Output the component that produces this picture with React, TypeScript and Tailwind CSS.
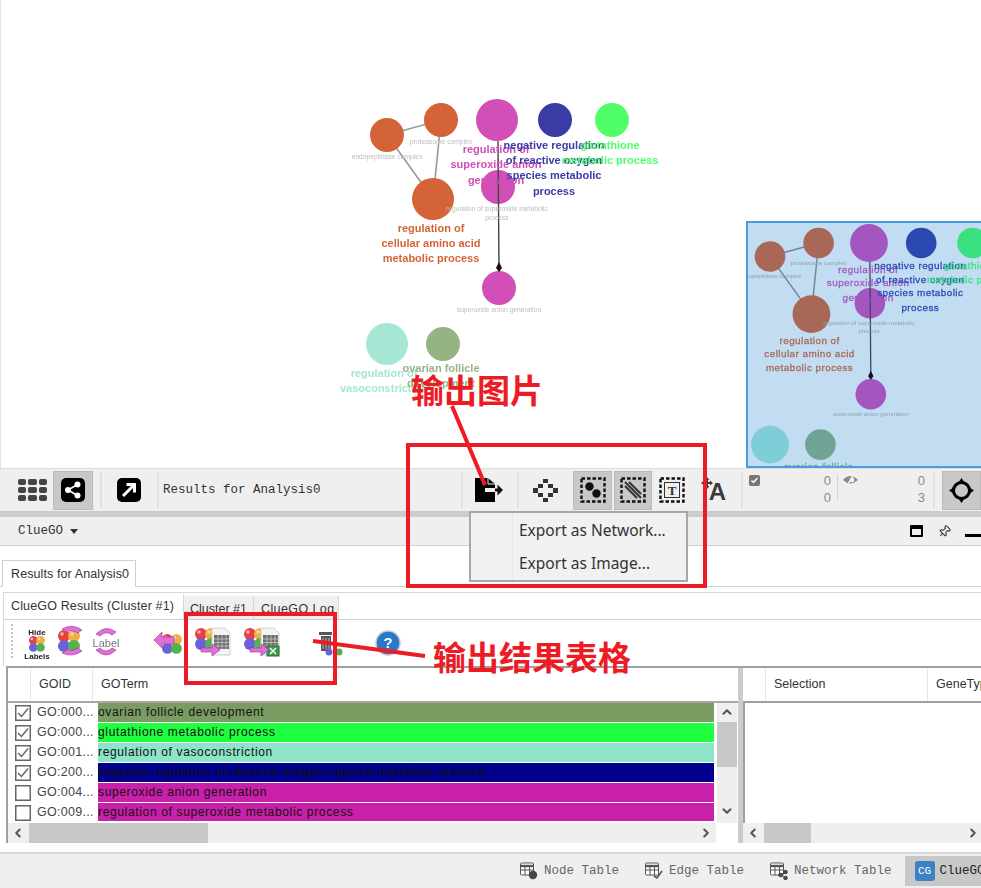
import { ChevronDown, ChevronLeft, ChevronRight, ChevronUp, Pin } from 'lucide-react';

const MONO = "font-['Liberation_Mono',monospace]";
const SANS = "font-['Liberation_Sans',Arial,sans-serif]";

// ClueGO graph, same data for the main view and the bird's eye view
const nodes = [
  { x: 387, y: 135, r: 17, c: 'orange' },
  { x: 441, y: 120, r: 17, c: 'orange' },
  { x: 433, y: 199, r: 21, c: 'orange' },
  { x: 497, y: 120, r: 21, c: 'purple' },
  { x: 498, y: 187, r: 17, c: 'purple' },
  { x: 499, y: 288, r: 17, c: 'purple' },
  { x: 555, y: 120, r: 17, c: 'navy' },
  { x: 612, y: 120, r: 17, c: 'green' },
  { x: 387, y: 344, r: 21, c: 'teal' },
  { x: 443, y: 344, r: 17, c: 'olive' },
];

const labels = [
  { x: 496, y: 153, t: 'regulation of', c: 'purple' },
  { x: 496, y: 168, t: 'superoxide anion', c: 'purple' },
  { x: 496, y: 184, t: 'generation', c: 'purple' },
  { x: 554, y: 149, t: 'negative regulation', c: 'navy' },
  { x: 554, y: 164, t: 'of reactive oxygen', c: 'navy' },
  { x: 554, y: 179, t: 'species metabolic', c: 'navy' },
  { x: 554, y: 195, t: 'process', c: 'navy' },
  { x: 610, y: 149, t: 'glutathione', c: 'green' },
  { x: 610, y: 164, t: 'metabolic process', c: 'green' },
  { x: 431, y: 232, t: 'regulation of', c: 'orange' },
  { x: 431, y: 247, t: 'cellular amino acid', c: 'orange' },
  { x: 431, y: 262, t: 'metabolic process', c: 'orange' },
  { x: 384, y: 377, t: 'regulation of', c: 'teal' },
  { x: 384, y: 392, t: 'vasoconstriction', c: 'teal' },
  { x: 441, y: 372, t: 'ovarian follicle', c: 'olive' },
  { x: 441, y: 387, t: 'development', c: 'olive' },
];

const smallLabels = [
  { x: 441, y: 144, t: 'proteasome complex' },
  { x: 387, y: 159, t: 'endopeptidase complex' },
  { x: 497, y: 211, t: 'regulation of superoxide metabolic' },
  { x: 497, y: 220, t: 'process' },
  { x: 499, y: 312, t: 'superoxide anion generation' },
];

const mainColors: Record<string, string> = {
  orange: '#d46337',
  purple: '#d14fb6',
  navy: '#3a3ba5',
  green: '#50ff68',
  teal: '#a6e6d5',
  olive: '#96b384',
};

const miniColors: Record<string, string> = {
  orange: '#a96757',
  purple: '#a356c0',
  navy: '#2b48b3',
  green: '#3adf80',
  teal: '#7eced7',
  olive: '#70a595',
};

const Network = ({ mini }: { mini?: boolean }) => {
  const colors = mini ? miniColors : mainColors;
  return (
    <g>
      <path d="M387 135 L441 120 L433 199 Z" fill="none" stroke={mini ? '#6f8594' : '#999'} strokeWidth="1.6" />
      {nodes.map((n) => (
        <circle key={`${n.x}-${n.y}`} cx={n.x} cy={n.y} r={n.r} fill={colors[n.c]} />
      ))}
      <path d="M498 141 L499 268" stroke={mini ? '#33485c' : '#444'} strokeWidth="1.4" />
      <path d="M499 262 L502 268 L499 272 L496 268 Z" fill="#111" />
      {labels.map((l) => (
        <text
          key={`${l.x}-${l.y}`}
          x={l.x}
          y={l.y}
          textAnchor="middle"
          fill={colors[l.c]}
          stroke={mini ? colors[l.c] : 'none'}
          strokeWidth={mini ? 0.3 : 0}
          className={mini ? "font-['Liberation_Sans',sans-serif] text-[11px] tracking-[0.5px]" : "font-['Liberation_Sans',sans-serif] text-[11px] font-bold"}
        >
          {l.t}
        </text>
      ))}
      {smallLabels.map((l) => (
        <text
          key={`${l.x}-${l.y}`}
          x={l.x}
          y={l.y}
          textAnchor="middle"
          fill={mini ? '#8fa3b5' : '#bdbdbd'}
          className="font-['Liberation_Sans',sans-serif] text-[6.7px]"
        >
          {l.t}
        </text>
      ))}
    </g>
  );
};

// glossy ball cluster used all over the ClueGO toolbar
const Balls = ({ x = 0, y = 0, s = 1 }: { x?: number; y?: number; s?: number }) => (
  <g transform={`translate(${x} ${y}) scale(${s})`}>
    <circle cx="6" cy="6" r="6" fill="#e8403f" />
    <circle cx="16" cy="6" r="6" fill="#eeb040" />
    <circle cx="6" cy="16" r="6" fill="#6a62d8" />
    <circle cx="16" cy="16" r="6" fill="#55b050" />
    <circle cx="4" cy="4" r="1.8" fill="#fff" opacity="0.6" />
    <circle cx="14" cy="4" r="1.8" fill="#fff" opacity="0.5" />
  </g>
);

const PinkArrow = ({ d }: { d: string }) => (
  <path d={d} fill="#e070d8" stroke="#a0309a" strokeWidth="0.6" />
);

const Sheet = ({ x, y }: { x: number; y: number }) => (
  <g transform={`translate(${x} ${y})`}>
    <path d="M0 0 H13 L18 5 V27 H0 Z" fill="#f4f4f4" stroke="#d0d0d0" />
    <path d="M2 7 H17 V21 H2 Z" fill="#6e6e6e" />
    <path d="M2 11 H17 M2 14.5 H17 M2 18 H17 M6 7 V21 M10 7 V21 M14 7 V21" stroke="#d4d4d4" strokeWidth="0.7" />
  </g>
);

const SelectIcon = ({ kind }: { kind: 'nodes' | 'edges' | 'text' }) => (
  <svg width="26" height="26" viewBox="0 0 26 26">
    <rect x="1.5" y="1.5" width="23" height="23" fill="none" stroke="#111" strokeWidth="2.4" strokeDasharray="3.5 2" />
    {kind === 'nodes' && (
      <>
        <circle cx="9.5" cy="9.5" r="4.2" fill="#111" />
        <circle cx="16.5" cy="16.5" r="4.2" fill="#111" />
      </>
    )}
    {kind === 'edges' && <path d="M5 9 L17 21 M5 5 L21 21 M9 5 L21 17" stroke="#333" strokeWidth="2" />}
    {kind === 'text' && (
      <>
        <rect x="5.5" y="5.5" width="15" height="15" fill="none" stroke="#333" />
        <text x="13" y="18" textAnchor="middle" fill="#333" className="font-['Liberation_Serif',serif] text-[13px] font-bold">
          T
        </text>
      </>
    )}
  </svg>
);

const TargetIcon = () => (
  <svg width="25" height="25" viewBox="0 0 25 25">
    <circle cx="12.5" cy="12.5" r="8" fill="none" stroke="#000" strokeWidth="3" />
    <path d="M12.5 0 L16.5 6 H8.5 Z M12.5 25 L16.5 19 H8.5 Z M0 12.5 L6 8.5 V16.5 Z M25 12.5 L19 8.5 V16.5 Z" fill="#000" />
  </svg>
);

const Sep = ({ className }: { className: string }) => <div className={`w-[2px] h-[36px] bg-[#e0e0e0] ${className}`} />;

const Count = ({ a, b, className }: { a: string; b: string; className: string }) => (
  <div className={`flex flex-col items-end text-[13px] leading-[17px] text-[#8a8a8a] self-start pt-[3px] ${SANS} ${className}`}>
    <span>{a}</span>
    <span>{b}</span>
  </div>
);

const rows = [
  { id: 'GO:000...', term: 'ovarian follicle development', bg: 'bg-[#7a9c62]', checked: true },
  { id: 'GO:000...', term: 'glutathione metabolic process', bg: 'bg-[#1eff40]', checked: true },
  { id: 'GO:001...', term: 'regulation of vasoconstriction', bg: 'bg-[#8ee4c8]', checked: true },
  { id: 'GO:200...', term: 'negative regulation of reactive oxygen species metabolic process', bg: 'bg-[#00008c]', checked: true },
  { id: 'GO:004...', term: 'superoxide anion generation', bg: 'bg-[#c820a8]', checked: false },
  { id: 'GO:009...', term: 'regulation of superoxide metabolic process', bg: 'bg-[#c820a8]', checked: false },
];

const Check = ({ checked }: { checked: boolean }) => (
  <svg width="16" height="16" viewBox="0 0 16 16" className="shrink-0">
    <rect x="0.75" y="0.75" width="14.5" height="14.5" fill="#fff" stroke="#666" strokeWidth="1.5" />
    {checked && <path d="M3 8 L6.5 11.5 L13 3.5" fill="none" stroke="#666" strokeWidth="1.5" />}
  </svg>
);

const TableIcon = ({ extra }: { extra: 'node' | 'edge' | 'net' }) => (
  <svg width="18" height="18" viewBox="0 0 18 18">
    <rect x="0.5" y="1" width="13" height="12" rx="1" fill="#fff" stroke="#555" />
    <path d="M0.5 4 H13.5" stroke="#555" strokeWidth="2.4" />
    <path d="M0.5 8 H13.5 M5 3 V13 M9.5 3 V13" stroke="#555" />
    {extra === 'node' && <circle cx="13" cy="13" r="4.2" fill="#444" />}
    {extra === 'edge' && <path d="M9 14 L12 16 L17 9" fill="none" stroke="#555" strokeWidth="1.6" />}
    {extra === 'net' && (
      <g fill="#444" stroke="#444">
        <circle cx="15.5" cy="10" r="1.8" />
        <circle cx="15.5" cy="16" r="1.8" />
        <circle cx="10.5" cy="13" r="1.8" />
        <path d="M15.5 10 L10.5 13 L15.5 16" fill="none" />
      </g>
    )}
  </svg>
);

const StatusTab = ({ label, extra, className }: { label: string; extra: 'node' | 'edge' | 'net'; className: string }) => (
  <div className={`flex items-center gap-[6px] text-[12.5px] text-[#666] ${MONO} ${className}`}>
    <TableIcon extra={extra} />
    <span>{label}</span>
  </div>
);

const App = () => {
  return (
    <div className={`relative w-[981px] h-[888px] overflow-hidden bg-white ${SANS}`}>
      {/* network canvas */}
      <div className="relative h-[468px] border-l border-[#e4e4e4]">
        <svg width="981" height="468" className="absolute left-[-1px] top-0 blur-[0.5px]">
          <Network />
        </svg>
        <div className="absolute left-[745px] top-[221px] w-[236px] h-[247px] overflow-hidden border-2 border-r-0 border-[#4a9ce0] bg-[#c2dcf2]">
          <svg width="236" height="247" className="blur-[0.3px]">
            <g transform="translate(-326.3 -88) scale(0.9)">
              <Network mini />
            </g>
          </svg>
        </div>
      </div>

      {/* main toolbar */}
      <div className="flex items-center h-[43px] pl-[18px] bg-[#efefef] border-t border-[#dcdcdc]">
        <div className="w-[29px] grid grid-cols-3 gap-[2px]">
          {Array.from({ length: 9 }).map((_, i) => (
            <div key={i} className="h-[6px] rounded-[2px] bg-[#444]" />
          ))}
        </div>
        <div className="ml-[6px] w-[40px] h-[39px] flex items-center justify-center bg-[#c8c8c8] border border-[#bbb]">
          <div className="w-[24px] h-[24px] rounded-[5px] bg-black flex items-center justify-center">
            <svg width="18" height="18" viewBox="0 0 18 18" fill="#fff">
              <circle cx="13.5" cy="3.5" r="3" />
              <circle cx="4" cy="9" r="3" />
              <circle cx="13.5" cy="14.5" r="3" />
              <path d="M13.5 3.5 L4 9 L13.5 14.5" fill="none" stroke="#fff" strokeWidth="1.6" />
            </svg>
          </div>
        </div>
        <Sep className="ml-[7px]" />
        <div className="ml-[15px] w-[24px] h-[24px] rounded-[5px] bg-black flex items-center justify-center">
          <svg width="18" height="18" viewBox="0 0 18 18">
            <path d="M3 15 L13 5 M6.5 3.5 H14.5 V11.5" fill="none" stroke="#fff" strokeWidth="3" />
          </svg>
        </div>
        <Sep className="ml-[16px]" />
        <div className={`ml-[4px] w-[298px] text-[12.5px] text-[#333] ${MONO}`}>Results for Analysis0</div>
        <Sep className="" />
        <div className="ml-[12px] w-[28px]">
          <svg width="28" height="24" viewBox="0 0 28 24">
            <path d="M0 0 H13 L20 6 V10 H10 V14 H20 V24 H0 Z" fill="#000" />
            <path d="M13 0 V6 H20" fill="none" stroke="#efefef" strokeWidth="1" />
            <path d="M20 10.5 H22.5 V6.5 L28 12 L22.5 17.5 V13.5 H20 Z" fill="#111" />
          </svg>
        </div>
        <Sep className="ml-[14px]" />
        <div className="ml-[14px] w-[25px]">
          <svg width="25" height="25" viewBox="0 0 25 25" fill="#333">
            <path d="M10 1 H15 V5 H10 Z M5 6 H10 V10 H5 Z M15 6 H20 V10 H15 Z M0 10 H5 V15 H0 Z M20 10 H25 V15 H20 Z M5 15 H10 V19 H5 Z M15 15 H20 V19 H15 Z M10 20 H15 V24 H10 Z" />
          </svg>
        </div>
        <div className="ml-[15px] w-[39px] h-[39px] flex items-center justify-center bg-[#c8c8c8] border border-[#bbb]">
          <SelectIcon kind="nodes" />
        </div>
        <div className="ml-[2px] w-[38px] h-[39px] flex items-center justify-center bg-[#c8c8c8] border border-[#bbb]">
          <SelectIcon kind="edges" />
        </div>
        <div className="ml-[7px] w-[26px]">
          <SelectIcon kind="text" />
        </div>
        <div className="ml-[16px] w-[25px] relative h-[28px] flex items-end justify-end">
          <span className="text-[24px] leading-[24px] font-bold text-[#3a3a3a]">A</span>
          <svg width="12" height="12" viewBox="0 0 12 12" className="absolute left-[0px] top-[1px]">
            <path d="M6 0 L8.5 3 H7 V5 H9 V3.5 L12 6 L9 8.5 V7 H7 V9 H8.5 L6 12 L3.5 9 H5 V7 H3 V8.5 L0 6 L3 3.5 V5 H5 V3 H3.5 Z" fill="#3a3a3a" />
          </svg>
        </div>
        <Sep className="ml-[15px]" />
        <div className="ml-[6px] w-[11px] h-[11px] self-start mt-[6px] rounded-[2px] bg-[#7a7472] flex items-center justify-center">
          <svg width="9" height="9" viewBox="0 0 9 9">
            <path d="M1.5 4.5 L3.5 6.5 L7.5 2" fill="none" stroke="#fff" strokeWidth="1.5" />
          </svg>
        </div>
        <Count a="0" b="0" className="w-[71px]" />
        <div className="ml-[6px] w-px h-[26px] bg-[#d4d4d4] self-start mt-[5px]" />
        <div className="ml-[5px] w-[15px] self-start mt-[5px]">
          <svg width="15" height="12" viewBox="0 0 15 12">
            <path d="M0 6 Q7 -2 15 6 Q7 13 0 6 Z" fill="#8a8a8a" />
            <circle cx="9" cy="6" r="2.4" fill="#efefef" />
            <path d="M11 0 L4 12" stroke="#efefef" strokeWidth="1.6" />
          </svg>
        </div>
        <Count a="0" b="3" className="w-[67px]" />
        <Sep className="ml-[8px]" />
        <div className="ml-[7px] w-[39px] h-[39px] flex items-center justify-center bg-[#c8c8c8] border border-[#bbb]">
          <TargetIcon />
        </div>
      </div>

      <div className="h-[6px] bg-[#cccccc]" />

      {/* panel title */}
      <div className="flex items-center h-[29px] pl-[18px] bg-[#efefef] border-b border-[#d0d0d0]">
        <span className={`text-[12.5px] text-[#333] ${MONO}`}>ClueGO</span>
        <svg width="8" height="5" viewBox="0 0 8 5" className="ml-[7px]">
          <path d="M0 0 H8 L4 5 Z" fill="#333" />
        </svg>
        <div className="ml-auto flex items-center">
          <div className="w-[13px] h-[12px] border-2 border-t-[4px] border-black rounded-[1px]" />
          <Pin size={13} color="#333" className="ml-[15px] rotate-45" />
          <div className="ml-[14px] w-[16px] h-[3px] mt-[8px] bg-black" />
        </div>
      </div>

      {/* ClueGO results */}
      <div className="relative h-[307px] pt-[14px] border-b border-[#d8d8d8]">
        <div className="flex h-[27px] pl-[2px] border-b border-[#cfcfcf]">
          <div className="w-[134px] h-[27px] pl-[8px] flex items-center bg-white border border-b-0 border-[#cfcfcf] text-[12.5px] tracking-[0.1px] text-[#333]">
            Results for Analysis0
          </div>
        </div>
        <div className="ml-[3px] mt-[5px] border-l border-t border-[#d8d8d8]">
          <div className="flex items-end h-[27px] border-b border-[#cfcfcf]">
            <div className="w-[180px] h-[25px] pl-[7px] flex items-center bg-white border-r border-[#d8d8d8] text-[12.5px] tracking-[0.15px] text-[#333]">
              ClueGO Results (Cluster #1)
            </div>
            <div className="w-[70px] h-[23px] pl-[6px] pt-[3px] flex items-center bg-[#efefef] border-r border-[#d8d8d8] text-[12.5px] text-[#333]">
              Cluster #1
            </div>
            <div className="w-[85px] h-[23px] pl-[7px] pt-[3px] flex items-center bg-[#efefef] border-r border-[#d8d8d8] text-[12.5px] tracking-[0.4px] text-[#333]">
              ClueGO Log
            </div>
          </div>

          {/* icon strip */}
          <div className="h-[46px]">
            <svg width="420" height="46" viewBox="0 0 420 46" className="blur-[0.3px]">
              <path d="M8 4 V40" stroke="#c4c4c4" strokeWidth="2" strokeDasharray="2 2" />
              <text x="33" y="15" textAnchor="middle" fill="#222" className="font-['Liberation_Sans',sans-serif] text-[8px] font-bold">Hide</text>
              <Balls x={25} y={16} s={0.72} />
              <text x="33" y="39" textAnchor="middle" fill="#222" className="font-['Liberation_Sans',sans-serif] text-[8px] font-bold">Labels</text>
              <Balls x={54} y={10} s={1} />
              <PinkArrow d="M58 9 Q68 3 78 10 L74 13 Q68 9 62 12 Z M58 33 Q68 38 78 31 L74 28 Q68 32 62 30 Z" />
              <text x="102" y="27" textAnchor="middle" fill="#777" className="font-['Liberation_Sans',sans-serif] text-[11px]">Label</text>
              <PinkArrow d="M92 14 Q102 4 112 12 L108 15 Q102 10 96 16 Z M92 30 Q102 40 112 30 L108 28 Q102 34 96 28 Z" />
              <Balls x={158} y={14} s={0.9} />
              <PinkArrow d="M150 20 L158 12 V17 H170 V24 H158 V28 Z" />
              <Balls x={191} y={8} s={1} />
              <Sheet x={208} y={8} />
              <PinkArrow d="M197 28 H208 V24 L216 30 L208 36 V32 H197 Z" />
              <Balls x={240} y={8} s={1} />
              <Sheet x={257} y={8} />
              <rect x="263" y="26" width="12" height="10" fill="#3d9a45" stroke="#2c7033" />
              <path d="M266 28 L272 34 M272 28 L266 34" stroke="#fff" strokeWidth="1.4" />
              <PinkArrow d="M246 28 H257 V24 L265 30 L257 36 V32 H246 Z" />
              <path d="M315 12 H328 V15 H315 Z M317 16 H327 V31 H317 Z" fill="#555" />
              <path d="M319 18 V29 M322 18 V29 M325 18 V29" stroke="#bbb" />
              <circle cx="325" cy="32" r="3.5" fill="#6a62d8" />
              <circle cx="335" cy="32" r="3.5" fill="#55b050" />
              <circle cx="384" cy="23" r="12" fill="#2a78c8" stroke="#c8c8c8" strokeWidth="1.5" />
              <text x="384" y="28" textAnchor="middle" fill="#fff" className="font-['Liberation_Sans',sans-serif] text-[15px] font-bold">?</text>
            </svg>
          </div>
        </div>

        {/* tables */}
        <div className="flex ml-[6px] h-[177px] border-t-2 border-[#a0a0a0] border-l-2">
          <div className="w-[730px] shrink-0 flex flex-col">
            <div className="flex items-center h-[35px] shrink-0 text-[12.5px] text-[#333] border-b-2 border-[#a8a8a8]">
              <div className="w-[23px] h-full border-r border-[#e8e8e8]" />
              <div className="w-[62px] h-full pl-[8px] flex items-center border-r border-[#e8e8e8]">GOID</div>
              <div className="pl-[8px]">GOTerm</div>
            </div>
            <div className="flex flex-1 min-h-0">
              <div className="w-[709px] shrink-0 h-[118px] overflow-hidden">
                {rows.map((r) => (
                  <div key={r.term} className="flex h-[20px] pb-px">
                    <div className="w-[23px] pl-[7px] pt-[2px]">
                      <Check checked={r.checked} />
                    </div>
                    <div className="w-[67px] pl-[6px] text-[12.5px] leading-[19px] text-[#444] tracking-[0.3px] whitespace-nowrap">{r.id}</div>
                    <div className={`w-[616px] h-[19px] text-[12px] leading-[19px] tracking-[0.65px] text-[#111] ${r.bg}`}>{r.term}</div>
                  </div>
                ))}
              </div>
              <div className="w-[20px] h-[120px] flex flex-col items-center bg-[#efefef] text-[#555]">
                <ChevronUp size={14} strokeWidth={3.5} className="mt-[2px] mb-[3px]" />
                <div className="w-full h-[45px] bg-[#c8c8c8]" />
                <ChevronDown size={14} strokeWidth={3.5} className="mt-auto mb-[5px]" />
              </div>
            </div>
            <div className="flex items-center h-[20px] shrink-0 bg-[#efefef] text-[#555]">
              <ChevronLeft size={14} strokeWidth={3.5} className="ml-[3px]" />
              <div className="ml-[4px] w-[179px] h-full bg-[#c8c8c8]" />
              <ChevronRight size={14} strokeWidth={3.5} className="ml-[491px]" />
              <div className="ml-auto w-[22px] h-full bg-white" />
            </div>
          </div>
          <div className="w-[5px] shrink-0 bg-[#cccccc]" />
          <div className="flex-1 min-w-0 overflow-hidden flex flex-col">
            <div className="flex items-center h-[33px] shrink-0 text-[12.5px] text-[#333]">
              <div className="w-[23px] shrink-0 h-full border-r border-[#e8e8e8]" />
              <div className="w-[162px] shrink-0 h-full pl-[8px] flex items-center border-r border-[#e8e8e8]">Selection</div>
              <div className="pl-[8px] whitespace-nowrap">GeneTypes</div>
            </div>
            <div className="flex-1 border-t-2 border-l-2 border-[#a0a0a0] bg-white" />
            <div className="flex items-center h-[20px] shrink-0 bg-[#efefef] text-[#555]">
              <ChevronLeft size={14} strokeWidth={3.5} className="ml-[3px]" />
              <div className="ml-[4px] w-[47px] h-full bg-[#c8c8c8]" />
              <ChevronRight size={14} strokeWidth={3.5} className="ml-[155px]" />
            </div>
          </div>
        </div>
      </div>

      {/* status bar */}
      <div className="flex items-center h-[35px] bg-[#efefef] border-t border-[#d8d8d8] whitespace-nowrap">
        <StatusTab label="Node Table" extra="node" className="ml-[520px]" />
        <StatusTab label="Edge Table" extra="edge" className="ml-[26px]" />
        <StatusTab label="Network Table" extra="net" className="ml-[26px]" />
        <div className={`ml-[13px] h-[30px] flex-1 flex items-center pl-[10px] bg-[#c8c8c8] text-[12.5px] text-[#222] ${MONO}`}>
          <span className="w-[20px] h-[20px] rounded-[3px] bg-[#3a82c4] text-white text-[11px] leading-[20px] text-center shrink-0">CG</span>
          <span className="ml-[5px]">ClueGO</span>
        </div>
      </div>

      {/* export menu */}
      <div className="absolute left-[469px] top-[511px] w-[219px] h-[71px] pl-[48px] pt-[1px] bg-[#f1f1f1] border-2 border-[#a8a8a8] font-['Noto_Sans',sans-serif] text-[15.5px] text-[#333]">
        <div className="absolute left-[41px] top-0 bottom-0 w-px bg-[#e8e8e8]" />
        <div className="h-[33px] leading-[33px]">Export as Network...</div>
        <div className="h-[33px] leading-[33px]">Export as Image...</div>
      </div>

      {/* red annotations */}
      <div className="absolute left-[406px] top-[443px] w-[301px] h-[145px] border-4 border-[#ed1c24]" />
      <div className="absolute left-[184px] top-[612px] w-[153px] h-[73px] border-4 border-[#ed1c24]" />
      <svg width="981" height="888" className="absolute left-0 top-0">
        <path d="M452 406 L485 485" stroke="#ed1c24" strokeWidth="4" />
        <path d="M313 641 L425 656" stroke="#ed1c24" strokeWidth="4" />
      </svg>
      <div className="absolute left-[411px] top-[367px] text-[33px] leading-[44px] font-bold text-[#ed1c24] font-['Noto_Sans_CJK_SC',sans-serif]">
        输出图片
      </div>
      <div className="absolute left-[433px] top-[634px] text-[33px] leading-[44px] font-bold text-[#ed1c24] font-['Noto_Sans_CJK_SC',sans-serif]">
        输出结果表格
      </div>
    </div>
  );
};

export default App;
